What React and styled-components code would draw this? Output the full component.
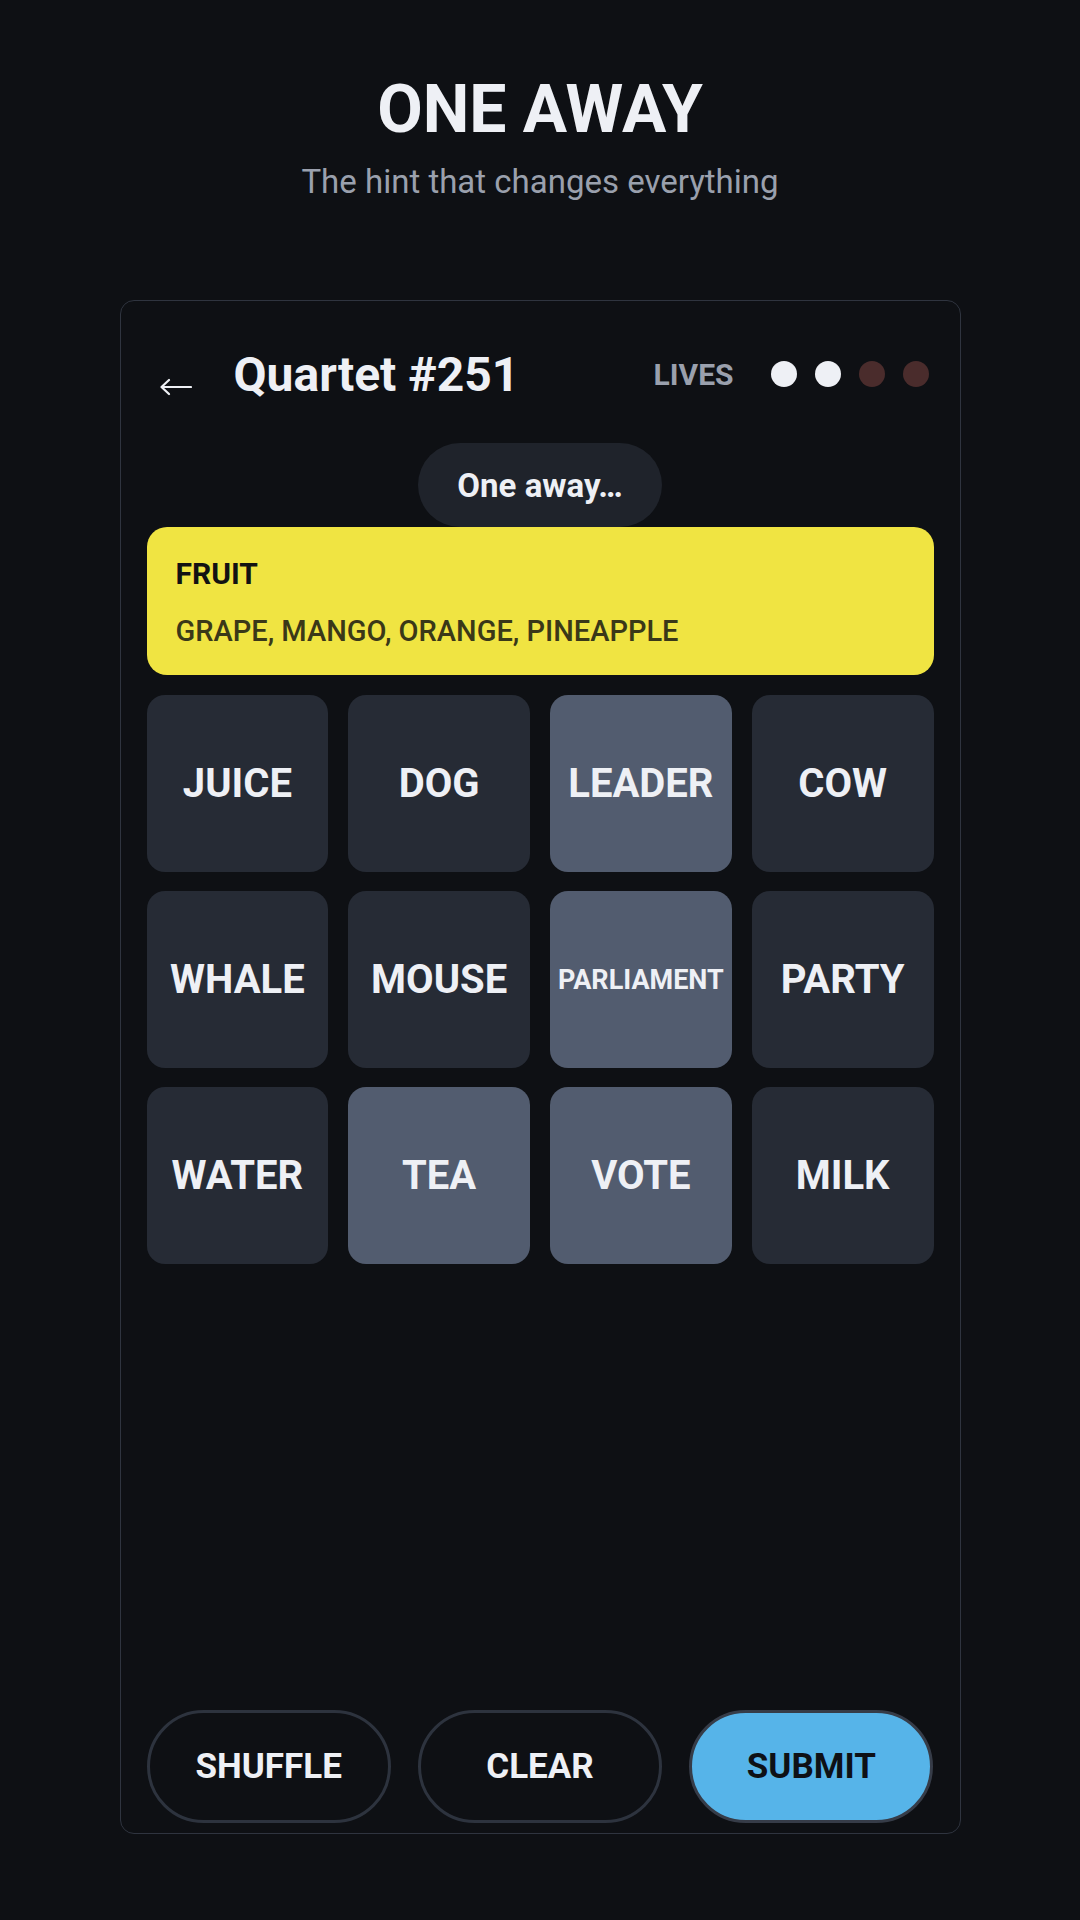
import React from "react";
import styled, { createGlobalStyle } from "styled-components";

const GlobalStyle = createGlobalStyle`
  html, body {
    margin: 0;
    padding: 0;
    background: #0e1014;
  }
  body {
    font-family: Roboto, "Liberation Sans", sans-serif;
    color: #eef0f5;
  }
  * {
    box-sizing: border-box;
  }
`;

const Page = styled.div`
  width: 1080px;
  min-height: 1920px;
  display: flex;
  flex-direction: column;
  align-items: center;
  padding-top: 70px;
`;

const Title = styled.h1`
  margin: 0;
  font-size: 66px;
  line-height: 80px;
  font-weight: 700;
  color: #eef0f5;
`;

const Subtitle = styled.p`
  margin: 12px 0 0;
  font-size: 33px;
  line-height: 40px;
  font-weight: 400;
  color: #9aa0ad;
`;

const Card = styled.div`
  margin-top: 98px;
  width: 841px;
  height: 1534px;
  border: 1px solid #2f343f;
  border-radius: 14px;
  background: #0e1014;
  padding: 43px 26px 10px;
  display: flex;
  flex-direction: column;
`;

const Header = styled.div`
  height: 60px;
  display: flex;
  align-items: center;
  padding: 0 5px 0 13px;
`;

const BackButton = styled.button`
  background: none;
  border: none;
  padding: 0;
  margin-top: 26px;
  width: 32px;
  height: 20px;
  display: flex;
  color: #eef0f5;
  cursor: pointer;
`;

const GameName = styled.h2`
  margin: 0 0 0 42px;
  font-size: 48px;
  font-weight: 700;
  color: #eef0f5;
  flex: 1;
`;

const LivesLabel = styled.span`
  font-size: 30px;
  font-weight: 700;
  color: #9aa0ad;
  margin-right: 37px;
`;

const Dots = styled.div`
  display: flex;
  gap: 18px;
`;

const Dot = styled.span`
  width: 26px;
  height: 26px;
  border-radius: 50%;
  background: ${(props) => (props.used ? "#4a2c2c" : "#eef0f5")};
`;

const Toast = styled.div`
  align-self: center;
  margin-top: 39px;
  height: 84px;
  padding: 0 39px;
  border-radius: 42px;
  background: #1f232b;
  display: flex;
  align-items: center;
  font-size: 33px;
  font-weight: 700;
  color: #eef0f5;
`;

const SolvedGroup = styled.div`
  background: #f0e442;
  border-radius: 20px;
  padding: 30px 29px 27px;
  display: flex;
  flex-direction: column;
  gap: 23px;
`;

const GroupName = styled.div`
  font-size: 30px;
  line-height: 34px;
  font-weight: 700;
  color: #121212;
`;

const GroupWords = styled.div`
  font-size: 29px;
  line-height: 34px;
  font-weight: 500;
  color: #3a3818;
`;

const Grid = styled.div`
  margin-top: 20px;
  display: grid;
  grid-template-columns: repeat(4, 1fr);
  grid-auto-rows: 177px;
  gap: 19px 20px;
`;

const Tile = styled.button`
  border: none;
  border-radius: 18px;
  background: ${(props) => (props.selected ? "#525c6f" : "#262b35")};
  color: #eef0f5;
  font-family: Roboto, "Liberation Sans", sans-serif;
  font-weight: 700;
  font-size: ${(props) => props.size}px;
  display: flex;
  align-items: center;
  justify-content: center;
  padding: 0;
  cursor: pointer;
`;

const Actions = styled.div`
  margin-top: auto;
  display: flex;
  gap: 27px;
`;

const ActionButton = styled.button`
  flex: 1;
  height: 113px;
  border-radius: 57px;
  border: 3px solid ${(props) => (props.primary ? "#363c48" : "#2d333e")};
  background: ${(props) => (props.primary ? "#56b4e9" : "transparent")};
  color: ${(props) => (props.primary ? "#0e1116" : "#eef0f5")};
  font-family: Roboto, "Liberation Sans", sans-serif;
  font-size: 35px;
  font-weight: 700;
  cursor: pointer;
`;

const words = [
  { w: "JUICE" },
  { w: "DOG" },
  { w: "LEADER", sel: true },
  { w: "COW" },
  { w: "WHALE" },
  { w: "MOUSE" },
  { w: "PARLIAMENT", sel: true },
  { w: "PARTY" },
  { w: "WATER" },
  { w: "TEA", sel: true },
  { w: "VOTE", sel: true },
  { w: "MILK" },
];

const lives = [false, false, true, true];

export default function App() {
  return (
    <Page>
      <GlobalStyle />
      <Title>ONE AWAY</Title>
      <Subtitle>The hint that changes everything</Subtitle>
      <Card>
        <Header>
          <BackButton aria-label="Back">
            <svg width="32" height="20" viewBox="0 0 32 20" fill="none">
              <path
                d="M1.5 10H31M1.5 10L9 3M1.5 10L9 17"
                stroke="currentColor"
                strokeWidth="2.2"
                strokeLinecap="round"
                strokeLinejoin="round"
              />
            </svg>
          </BackButton>
          <GameName>Quartet #251</GameName>
          <LivesLabel>LIVES</LivesLabel>
          <Dots>
            {lives.map((used, i) => (
              <Dot key={i} used={used} />
            ))}
          </Dots>
        </Header>
        <Toast>One away…</Toast>
        <SolvedGroup>
          <GroupName>FRUIT</GroupName>
          <GroupWords>GRAPE, MANGO, ORANGE, PINEAPPLE</GroupWords>
        </SolvedGroup>
        <Grid>
          {words.map((item) => (
            <Tile
              key={item.w}
              selected={item.sel}
              size={item.w.length > 8 ? 27 : 40}
            >
              {item.w}
            </Tile>
          ))}
        </Grid>
        <Actions>
          <ActionButton>SHUFFLE</ActionButton>
          <ActionButton>CLEAR</ActionButton>
          <ActionButton primary>SUBMIT</ActionButton>
        </Actions>
      </Card>
    </Page>
  );
}
